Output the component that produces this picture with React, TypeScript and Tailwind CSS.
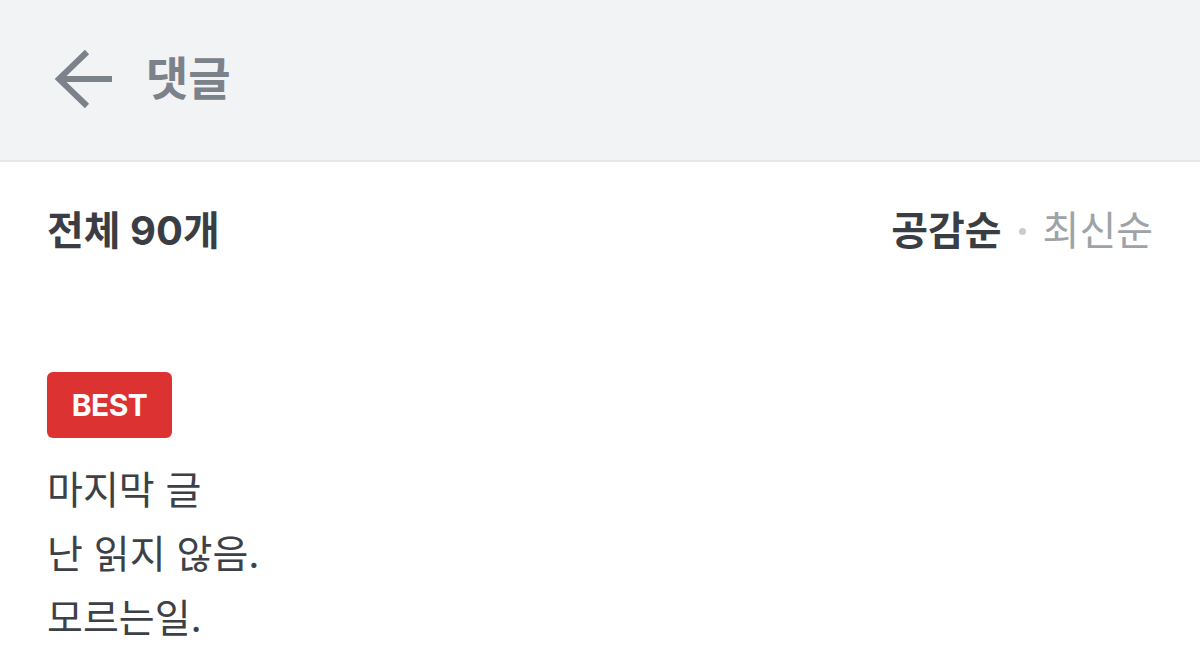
import React from 'react';

const font = { fontFamily: 'Inter, "Noto Sans CJK KR", "Noto Sans", sans-serif' };

export default function App() {
    return (
        <div className="min-h-screen bg-white" style={font}>
            <header className="h-[162px] bg-[#f2f3f5] border-b-2 border-[#e4e5e7] flex items-center pl-[54px]">
                <svg width="62" height="62" viewBox="0 0 62 62" fill="none" stroke="#7c828a" strokeWidth="6" className="-mt-[2px]">
                    <path d="M58 31H6" />
                    <path d="M33 4L5 31L33 58" />
                </svg>
                <h1 className="ml-[30px] text-[46px] font-bold text-[#7c828a] leading-none -mt-[4px]">댓글</h1>
            </header>

            <div className="px-[47px]">
                <div className="flex items-center justify-between h-[138px]">
                    <span className="text-[40px] font-bold text-[#3a3e44]">전체 90개</span>
                    <div className="flex items-center text-[40px]">
                        <span className="font-bold text-[#3a3e44]">공감순</span>
                        <span className="mx-[17px] w-[7px] h-[7px] rounded-full bg-[#c9ccd0]" />
                        <span className="text-[#9ea3a8]">최신순</span>
                    </div>
                </div>

                <div className="pt-[72px]">
                    <span className="inline-flex items-center justify-center w-[125px] h-[66px] rounded-[6px] bg-[#dc3232] text-white text-[30px] font-bold tracking-[-0.5px]">
                        BEST
                    </span>
                    <div className="mt-[20px] text-[39px] leading-[64px] text-[#3d4146]">
                        <p>마지막 글</p>
                        <p>난 읽지 않음.</p>
                        <p>모르는일.</p>
                    </div>
                </div>
            </div>
        </div>
    );
}
